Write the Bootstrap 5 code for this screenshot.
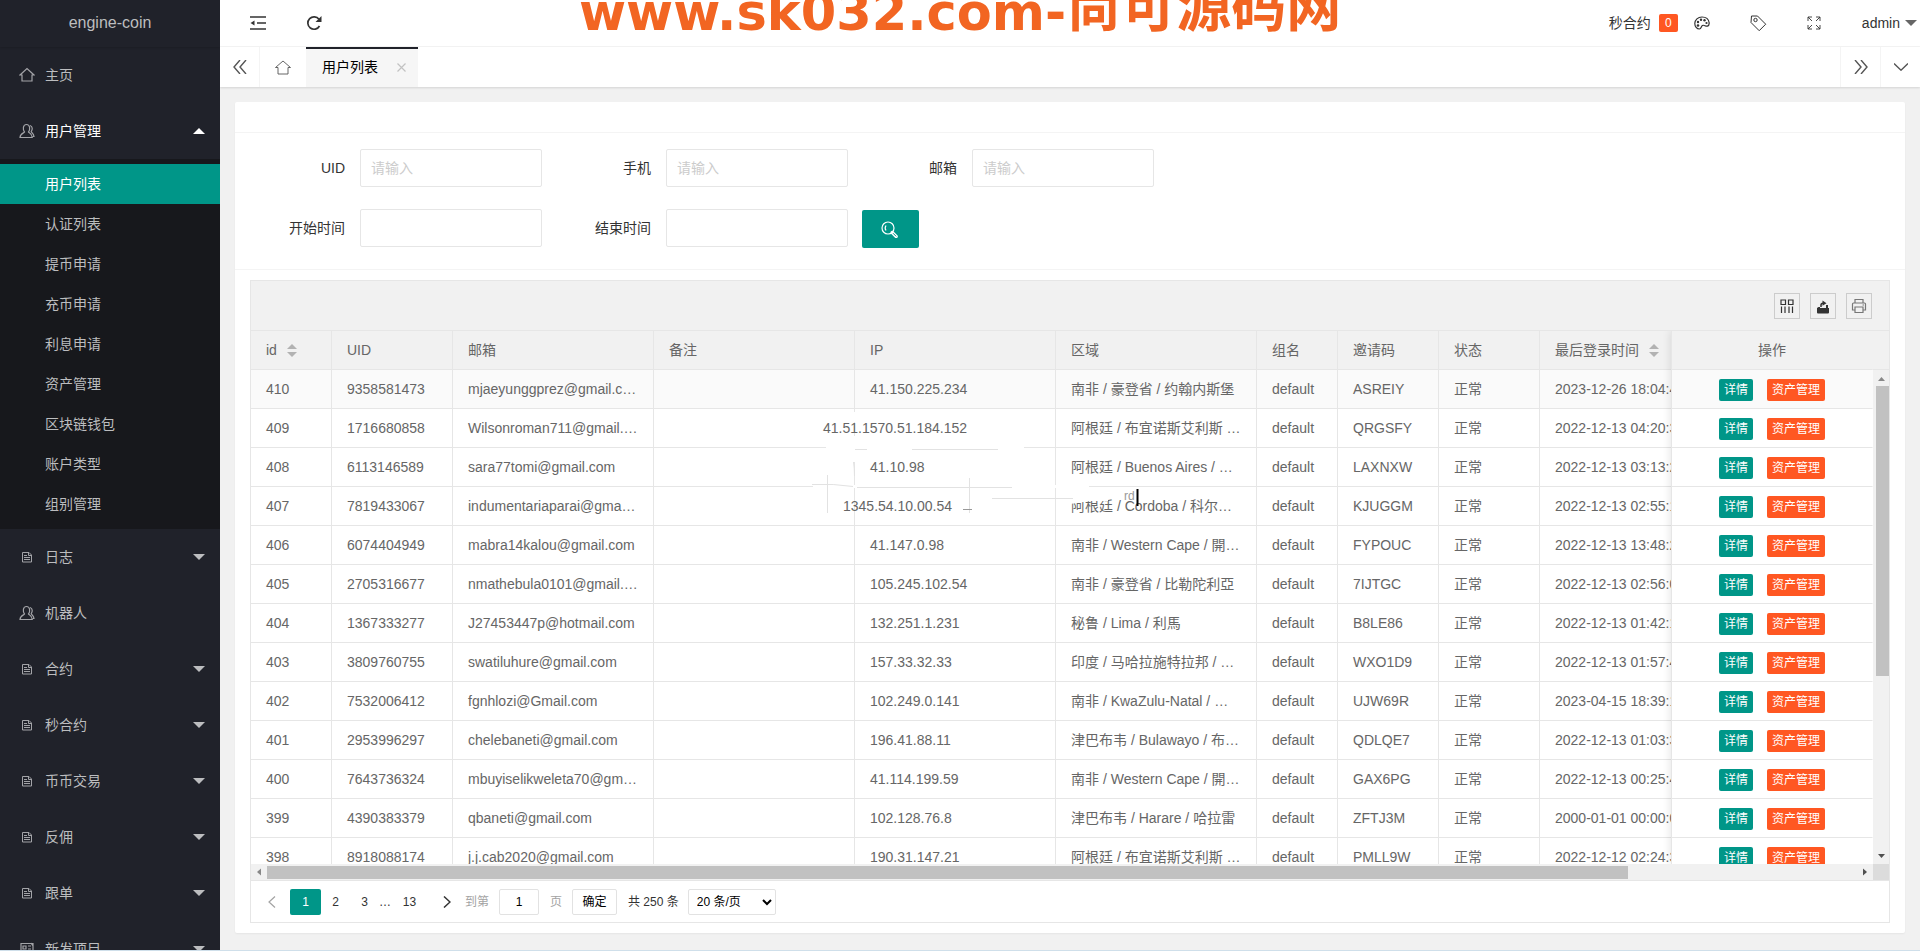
<!DOCTYPE html>
<html lang="zh-CN">
<head>
<meta charset="utf-8">
<meta name="viewport" content="width=device-width, initial-scale=1">
<title>engine-coin</title>
<link href="https://cdn.jsdelivr.net/npm/bootstrap@5.3.0/dist/css/bootstrap.min.css" rel="stylesheet">
<style>
:root{--teal:#009688;--orange:#ff5722;--line:#e6e6e6}
body{font:14px/20px "Liberation Sans","Noto Sans CJK SC",sans-serif;color:#333;background:#f1f1f1}
a{color:inherit;text-decoration:none}
svg{fill:none;stroke:currentColor;stroke-width:1.2;display:block}
.edge{height:1px;background:#cfdfea}
/* sidebar */
.side{width:220px;background:#20222a;color:#bcbdbf}
.side .brand{height:47px;font-size:16px;padding-bottom:2px;box-shadow:0 1px 2px rgba(0,0,0,.15)}
.side .top-link{height:56px;padding:0 15px 0 19px}
.side .top-link svg{width:16px;height:16px;margin-right:10px;color:#a3a4a8}
.side .top-link.open{color:#fff}
.side .sub{background:#17181c;padding:5px 0}
.side .sub a{height:40px;padding-left:45px}
.side .sub a.on{background:var(--teal);color:#fff}
.tri{border:6px solid transparent;border-top-color:currentColor;border-bottom-width:0;width:12px}
.tri.up{border-top-width:0;border-bottom:6px solid currentColor}
/* header */
.head{height:47px;border-bottom:1px solid #f4f4f4}
.head .left{padding-left:30px;gap:40px}
.head .right{padding-right:3px}
.head .full{margin:0 41px 0 24px}
.head .who{gap:5px}
.count{background:var(--orange);color:#fff;width:19px;height:18px;border-radius:2px;font-size:12px;line-height:18px;text-align:center}
.watermark{left:359px;top:-27px;color:#f26522;font-weight:700;white-space:nowrap;line-height:80px;height:80px;pointer-events:none}
.watermark .lat{font-family:"DejaVu Sans",sans-serif;font-size:51px}
.watermark .han{font-family:"Noto Sans CJK SC",sans-serif;font-size:55px;line-height:58px}
.tabs{height:40px;box-shadow:0 1px 2px rgba(0,0,0,.12);z-index:1}
.tabs>a,.tabs>button{width:40px;color:#555;border:0;background:none;padding:0}
.tabs .bl{border-left:1px solid #f4f4f4}
.tabs .br{border-right:1px solid #f4f4f4}
.tabs .tab-on{width:112px;background:#f6f6f6;color:#000;border-top:2px solid #20222a;padding:0 12px 2px 16px}
/* card */
.panel{margin:15px 15px 17px;border-radius:2px;box-shadow:0 1px 2px rgba(0,0,0,.05)}
.panel-top{height:31px;border-bottom:1px solid #f4f4f4}
.search{padding:16px 15px 22px;row-gap:22px;border-bottom:1px solid #f4f4f4}
.search .line{height:38px}
.search label{width:110px;padding-right:15px;text-align:right}
.search .field{margin-right:14px}
.search .form-control{width:182px;height:38px;border-radius:2px;border-color:var(--line);font-size:14px;padding:0 10px}
.search .form-control::placeholder{color:#ccc}
.search .go{width:57px;height:38px;border-radius:2px;background:var(--teal);color:#fff;border:0;margin-top:1px}
.grid-wrap{padding:10px 15px}
.gridbox{border:1px solid var(--line)}
.tools{height:50px;background:#f1f1f1;border-bottom:1px solid var(--line);padding-right:17px;gap:10px}
.tools button{width:26px;height:26px;border:1px solid #ccc;background:none;padding:0;color:#333}
.tb{table-layout:fixed;border-collapse:separate;border-spacing:0;color:#666}
.tb th,.tb td{height:39px;padding:0 15px;border-right:1px solid var(--line);border-bottom:1px solid var(--line);font-weight:400;white-space:nowrap;overflow:hidden}
.tb th{background:#f1f1f1}
.tb tbody tr:first-child td{background:#fafafa}
.tb.main{width:1521px}
.fix{box-shadow:-1px 0 8px rgba(0,0,0,.1);z-index:2;border-left:1px solid var(--line)}
.tb.ops{width:201px}
.tb.ops th,.tb.ops td{text-align:center;border-right-color:transparent}
.tb.ops td{padding:2px 0 0}
.op{height:22px;font-size:12px;line-height:22px;padding:0 5px;border:0;border-radius:2px;color:#fff;background:var(--teal);vertical-align:middle}
.op+.op{background:var(--orange);margin-left:14px}
.sort{display:inline-flex;flex-direction:column;gap:3px;color:#b2b2b2;margin-left:10px;vertical-align:middle;margin-top:-2px}
.sort i{border:5px solid transparent;border-top:0;border-bottom:5px solid currentColor}
.sort i+i{border-bottom:0;border-top:5px solid currentColor}
.vbar{width:16px;background:#f1f1f1;color:#505050}
.vbar .cap{height:39px;border-bottom:1px solid var(--line)}
.vbar .btn-end,.hbar .btn-end{width:16px;height:16px;flex:none}
.vbar .thumb{width:13px;height:290px;background:#c1c1c1}
.hbar{height:16px;background:#f1f1f1;color:#505050}
.hbar .thumb{height:13px;width:85.6%;background:#c1c1c1}
.hbar .corner{width:16px;height:16px;background:#dcdcdc}
.btn-end svg{fill:currentColor;stroke:none}
.dim{color:#a3a3a3}
.glitch{left:529px;top:81px;stroke:none}
/* pager */
.pager{height:42px;border-top:1px solid var(--line);font-size:12px;padding-left:2px}
.pager a{height:26px;width:29px}
.pager a.w{width:37px}
.pager a.on{background:var(--teal);color:#fff;width:31px;border-radius:2px}
.pager .box{height:26px;border:1px solid #e2e2e2;border-radius:2px;background:#fff;font-size:12px;color:#000;padding:0}
.pager input.box{width:40px;text-align:center;margin:0 11px 0 10px}
.pager button.box{width:45px;margin:0 11px 0 10px}
.pager select.box{width:88px;margin-left:9px;padding-left:4px}
</style>
</head>
<body class="vh-100 d-flex flex-column overflow-hidden">
<div class="d-flex flex-grow-1" style="min-height:0">
  <nav class="side flex-shrink-0 overflow-hidden">
    <div class="brand d-flex align-items-center justify-content-center">engine-coin</div>
    <div id="menu"></div>
  </nav>

  <div class="flex-grow-1 d-flex flex-column overflow-hidden" style="min-width:0">
    <header class="head bg-white d-flex justify-content-between align-items-center position-relative overflow-hidden flex-shrink-0">
      <div class="left d-flex">
        <a href="#" aria-label="收起菜单"><svg width="16" height="16" viewBox="0 0 16 16"><path d="M0 2h16M7 8h9M0 14h16" stroke-width="1.6"/><path d="M0.500 8l4-2.500v5z" fill="currentColor" stroke="none"/></svg></a>
        <a href="#" aria-label="刷新"><svg width="16" height="16" viewBox="0 0 16 16"><path d="M13.500 11A6.200 6.200 0 1 1 13 4.300" stroke-width="1.700"/><path d="M15.500 1v6h-6z" fill="currentColor" stroke="none"/></svg></a>
      </div>
      <div class="watermark position-absolute d-flex"><span class="lat">www.sk032.com-</span><span class="han">尚可源码网</span></div>
      <div class="right d-flex align-items-center">
        <a href="#" class="d-flex align-items-center gap-1">秒合约<span class="count ms-1">0</span></a>
        <a href="#" class="ms-3 me-4" aria-label="主题"><svg width="16" height="14" viewBox="0 0 16 14"><path d="M8 1C4 1 .8 3.700.8 7.500c0 3 2 5.500 4.600 5.500 2 0 1.500-2.500 3-3.500 1.700-1.100 3.100 1.200 5 .6 1.500-.5 1.900-2.100 1.700-3.600C14.600 3.100 11.600 1 8 1z"/><g fill="currentColor" stroke="none"><circle cx="4" cy="9.500" r="1.300"/><circle cx="4" cy="6" r="1.200"/><circle cx="7" cy="3.700" r="1.200"/><circle cx="10.500" cy="4.200" r="1.200"/><circle cx="12.500" cy="7" r="1.100"/></g></svg></a>
        <a href="#" class="mx-3" aria-label="标签"><svg width="17" height="17" viewBox="0 0 17 17"><path d="M1.500 1h6l8.200 8.200-6.500 6.500L1 7.500z" stroke-linejoin="round" stroke-width="1"/><circle cx="5.500" cy="5" r="1.700" stroke-width="1"/></svg></a>
        <a href="#" class="full" aria-label="全屏"><svg width="14" height="14" viewBox="0 0 14 14"><path d="M1 5V1h4M9 1h4v4M13 9v4H9M5 13H1V9M1 1l4 4M13 1L9 5M13 13L9 9M1 13l4-4" stroke-width=".9"/></svg></a>
        <a href="#" class="who d-flex align-items-center">admin<i class="tri" style="color:#666"></i></a>
      </div>
    </header>

    <div class="tabs bg-white d-flex flex-shrink-0 position-relative">
      <button class="br d-flex align-items-center justify-content-center" aria-label="向左"><svg width="14" height="14" viewBox="0 0 14 14"><path d="M7 0L1 7l6 7M13 0L7 7l6 7" stroke-width="1.400"/></svg></button>
      <a href="#" class="d-flex align-items-center justify-content-center" style="width:46px" aria-label="主页"><svg width="16" height="15" viewBox="0 0 16 15"><path d="M.5 7.500L8 1l7.500 6.500H13V14H3V7.500z" stroke-width=".9"/></svg></a>
      <a href="#" class="tab-on d-flex align-items-center justify-content-between">用户列表<svg width="9" height="9" viewBox="0 0 9 9" style="color:#c2c2c2"><path d="M.5.5l8 8M8.500.5l-8 8"/></svg></a>
      <button class="bl ms-auto d-flex align-items-center justify-content-center" aria-label="向右"><svg width="14" height="14" viewBox="0 0 14 14"><path d="M1 0l6 7-6 7M7 0l6 7-6 7" stroke-width="1.400"/></svg></button>
      <button class="bl d-flex align-items-center justify-content-center" aria-label="更多"><svg width="14" height="8" viewBox="0 0 14 8"><path d="M0 .5L7 7.200 14 .5" stroke-width="1.400"/></svg></button>
    </div>

    <main class="panel bg-white flex-grow-1 d-flex flex-column" style="min-height:0">
      <div class="panel-top flex-shrink-0"></div>
      <form class="search d-flex flex-column flex-shrink-0">
        <div class="line d-flex">
          <div class="field d-flex align-items-center"><label for="f1">UID</label><input id="f1" class="form-control" placeholder="请输入"></div>
          <div class="field d-flex align-items-center"><label for="f2">手机</label><input id="f2" class="form-control" placeholder="请输入"></div>
          <div class="field d-flex align-items-center"><label for="f3">邮箱</label><input id="f3" class="form-control" placeholder="请输入"></div>
        </div>
        <div class="line d-flex">
          <div class="field d-flex align-items-center"><label for="f4">开始时间</label><input id="f4" class="form-control"></div>
          <div class="field d-flex align-items-center"><label for="f5">结束时间</label><input id="f5" class="form-control"></div>
          <button type="button" class="go d-flex align-items-center justify-content-center" aria-label="搜索"><svg width="17" height="17" viewBox="0 0 17 17" style="margin-left:-2px"><circle cx="7" cy="7" r="6"/><path d="M5 4.500c-1 1.500-1 3.500 0 5"/><path d="M11.200 11.500l4 4" stroke-width="3.200" stroke-linecap="round"/><path d="M12 12.200l3.200 3.200" stroke="#009688" stroke-width="1"/></svg></button>
        </div>
      </form>

      <div class="grid-wrap flex-grow-1 d-flex flex-column" style="min-height:0">
        <div class="gridbox flex-grow-1 d-flex flex-column" style="min-height:0">
          <div class="tools d-flex align-items-center justify-content-end flex-shrink-0">
            <button class="d-flex align-items-center justify-content-center" aria-label="筛选列"><svg width="14" height="14" viewBox="0 0 14 14"><path d="M1 1h4.500v4.500H1zM8.500 1H13v4.500H8.500zM1.500 7.500V14M5 7.500V14M9 7.500V14M12.500 7.500V14"/></svg></button>
            <button class="d-flex align-items-center justify-content-center" aria-label="导出"><svg width="14" height="14" viewBox="0 0 14 14" style="margin-top:2px"><path d="M1 8l1.500-1H4v1h6V5h2v3h1v4.500q0 1-1 1H2q-1 0-1-1z" fill="currentColor" stroke="none"/><path d="M5 7V5q0-1.800 2-1.800" stroke-width="1.500"/><path d="M6.500.5l4 2.700-4 2.500z" fill="currentColor" stroke="none"/></svg></button>
            <button class="d-flex align-items-center justify-content-center" aria-label="打印"><svg width="16" height="16" viewBox="0 0 16 16" style="color:#777"><path d="M4 5V1.500h8V5M3.500 12H1.500V6q0-1 1-1h11q1 0 1 1v6h-2M4 9h8v5.500H4zM11.500 7h1.500"/></svg></button>
          </div>
          <div class="d-flex flex-grow-1 position-relative overflow-hidden" style="min-height:0">
            <div class="flex-grow-1 overflow-hidden" style="min-width:0">
              <table class="tb main">
                <colgroup><col style="width:81px"><col style="width:121px"><col style="width:201px"><col style="width:201px"><col style="width:201px"><col style="width:201px"><col style="width:81px"><col style="width:101px"><col style="width:101px"><col></colgroup>
                <thead><tr><th>id<span class="sort"><i></i><i></i></span></th><th>UID</th><th>邮箱</th><th>备注</th><th>IP</th><th>区域</th><th>组名</th><th>邀请码</th><th>状态</th><th>最后登录时间<span class="sort"><i></i><i></i></span></th></tr></thead>
                <tbody id="rows"></tbody>
              </table>
            </div>
            <!-- broken grid lines and text cursor over the middle rows -->
            <svg class="glitch position-absolute" width="370" height="110" viewBox="780 412 370 110">
              <g fill="#fff"><path d="M852 412h4v10h-4zM852 436h4v26h-4zM826 446h198v3H826zM813 485h276v3H813zM1070 489h38v12h-18l-20 3z"/></g>
              <g stroke="#e2e2e2" stroke-width="1"><path d="M855 449.500h12M912 449.500h86M812 484.500q22-1 41 2M857 487.500h155M992 498.500h81M827.500 475v38M969.500 478v35M853.500 462q1 6 1 14"/><path d="M963 509.500h9" stroke="#999"/></g>
              <text x="1124" y="500" fill="#999" font-size="12">rd</text>
              <path d="M1137.500 489v17" stroke="#000" stroke-width="2"/>
            </svg>
            <div class="fix d-flex bg-white position-relative flex-shrink-0">
              <table class="tb ops"><thead><tr><th>操作</th></tr></thead><tbody id="ops"></tbody></table>
              <div class="vbar d-flex flex-column align-items-end" id="vbar">
                <div class="cap w-100 flex-shrink-0"></div>
                <span class="btn-end"><svg width="16" height="16"><path d="M5 11h7l-3.500-4z" fill="#888"/></svg></span>
                <div class="flex-grow-1"><div class="thumb"></div></div>
                <span class="btn-end"><svg width="16" height="16"><path d="M5 6h7L8.500 10z"/></svg></span>
              </div>
            </div>
          </div>
          <div class="hbar d-flex align-items-center flex-shrink-0">
            <span class="btn-end"><svg width="16" height="16"><path d="M10 4.500v7L6 8z" fill="#888"/></svg></span>
            <div class="flex-grow-1"><div class="thumb"></div></div>
            <span class="btn-end"><svg width="16" height="16"><path d="M6 4.500v7L10 8z"/></svg></span>
            <span class="corner"></span>
          </div>
          <div class="pager d-flex align-items-center flex-shrink-0">
            <a href="#" class="w d-flex align-items-center justify-content-center dim" aria-label="上一页"><svg width="8" height="12" viewBox="0 0 8 12"><path d="M7 .5L1 6l6 5.500"/></svg></a>
            <a href="#" class="on d-flex align-items-center justify-content-center">1</a>
            <a href="#" class="d-flex align-items-center justify-content-center">2</a>
            <a href="#" class="d-flex align-items-center justify-content-center">3</a>
            <span>…</span>
            <a href="#" class="w d-flex align-items-center justify-content-center">13</a>
            <a href="#" class="w d-flex align-items-center justify-content-center" aria-label="下一页"><svg width="8" height="12" viewBox="0 0 8 12"><path d="M1 .5L7 6l-6 5.500" stroke-width="1.500"/></svg></a>
            <label for="pg" class="dim">到第</label><input id="pg" class="box" value="1"><span class="dim">页</span>
            <button class="box">确定</button><span>共 250 条</span>
            <select class="box" aria-label="每页条数"><option>20 条/页</option></select>
          </div>
        </div>
      </div>
    </main>
  </div>
</div>
<div class="edge flex-shrink-0"></div>

<script>
const icons = {
  home: '<path d="M1 8l7-6.500L15 8h-2v6H3V8z"/>',
  user: '<path d="M5.500 9C3.800 7 3.600 1.500 7.500 1.500S11.200 7 9.500 9c.3 1 3.500 1.200 3.800 5.500H1c.3-4.300 4.200-4.500 4.500-5.500z"/><path d="M11 2.500c3 .8 2.500 4.500 1.200 6.200.2 1 2.500 1.500 2.800 4.800h-1.500"/>',
  doc: '<path stroke-width="1" d="M3.500 3.500h6.500l2.500 2.500v7h-9zM9.500 3.500V6.500h3M5 6.500h3M5 8.500h6M5 10.500h6"/>',
  pic: '<path d="M2 2.500h12v11H2zM4 5h3v3H4zM9 5h3M9 8h3M4 11h8M12 2l2 3"/>'
};
const menu = [
  ['home', '主页'],
  ['user', '用户管理', ['用户列表', '认证列表', '提币申请', '充币申请', '利息申请', '资产管理', '区块链钱包', '账户类型', '组别管理']],
  ['doc', '日志', 1], ['user', '机器人'], ['doc', '合约', 1], ['doc', '秒合约', 1],
  ['doc', '币币交易', 1], ['doc', '反佣', 1], ['doc', '跟单', 1], ['pic', '新发项目', 1]
];
document.getElementById('menu').innerHTML = menu.map(([ic, name, sub]) => {
  const open = Array.isArray(sub);
  return `<a href="#" class="top-link d-flex align-items-center ${open ? 'open' : ''}"><svg viewBox="0 0 16 16">${icons[ic]}</svg>${name}${sub ? `<i class="tri ms-auto ${open ? 'up' : ''}"></i>` : ''}</a>` +
    (open ? `<div class="sub">${sub.map((s, i) => `<a href="#" class="d-flex align-items-center ${i ? '' : 'on'}">${s}</a>`).join('')}</div>` : '');
}).join('');

const rows = [
  [410, '9358581473', 'mjaeyunggprez@gmail.c…', '41.150.225.234', '南非 / 豪登省 / 约翰内斯堡', 'ASREIY', '2023-12-26 18:04:4'],
  [409, '1716680858', 'Wilsonroman711@gmail.…', '41.51.1570.51.184.152', '阿根廷 / 布宜诺斯艾利斯 …', 'QRGSFY', '2022-12-13 04:20:3', 31],
  [408, '6113146589', 'sara77tomi@gmail.com', '41.10.98', '阿根廷 / Buenos Aires / …', 'LAXNXW', '2022-12-13 03:13:2'],
  [407, '7819433067', 'indumentariaparai@gma…', '1345.54.10.00.54', '阿根廷 / Cordoba / 科尔…', 'KJUGGM', '2022-12-13 02:55:1', 11],
  [406, '6074404949', 'mabra14kalou@gmail.com', '41.147.0.98', '南非 / Western Cape / 開…', 'FYPOUC', '2022-12-13 13:48:2'],
  [405, '2705316677', 'nmathebula0101@gmail.…', '105.245.102.54', '南非 / 豪登省 / 比勒陀利亞', '7IJTGC', '2022-12-13 02:56:0'],
  [404, '1367333277', 'J27453447p@hotmail.com', '132.251.1.231', '秘鲁 / Lima / 利馬', 'B8LE86', '2022-12-13 01:42:1'],
  [403, '3809760755', 'swatiluhure@gmail.com', '157.33.32.33', '印度 / 马哈拉施特拉邦 / …', 'WXO1D9', '2022-12-13 01:57:4'],
  [402, '7532006412', 'fgnhlozi@Gmail.com', '102.249.0.141', '南非 / KwaZulu-Natal / …', 'UJW69R', '2023-04-15 18:39:1'],
  [401, '2953996297', 'chelebaneti@gmail.com', '196.41.88.11', '津巴布韦 / Bulawayo / 布…', 'QDLQE7', '2022-12-13 01:03:3'],
  [400, '7643736324', 'mbuyiselikweleta70@gm…', '41.114.199.59', '南非 / Western Cape / 開…', 'GAX6PG', '2022-12-13 00:25:4'],
  [399, '4390383379', 'qbaneti@gmail.com', '102.128.76.8', '津巴布韦 / Harare / 哈拉雷', 'ZFTJ3M', '2000-01-01 00:00:0'],
  [398, '8918088174', 'j.j.cab2020@gmail.com', '190.31.147.21', '阿根廷 / 布宜诺斯艾利斯 …', 'PMLL9W', '2022-12-12 02:24:3']
];
document.getElementById('rows').innerHTML = rows.map(r =>
  `<tr><td>${r[0]}</td><td>${r[1]}</td><td>${r[2]}</td><td></td><td${r[7] ? ' class="overflow-visible"' : ''}>${r[7] ? `<span style="margin-left:${-r[7] - 16}px">${r[3]}</span>` : r[3]}</td><td>${r[4]}</td><td>default</td><td>${r[5]}</td><td>正常</td><td>${r[6]}</td></tr>`).join('');
document.getElementById('ops').innerHTML = rows.map(() =>
  '<tr><td><button class="op">详情</button><button class="op">资产管理</button></td></tr>').join('');
</script>
</body>
</html>
